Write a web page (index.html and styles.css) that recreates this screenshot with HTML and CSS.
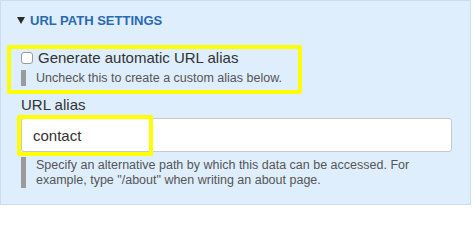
FILE: index.html
```html
<!DOCTYPE html>
<html>
<head>
<meta charset="utf-8">
<link rel="stylesheet" href="styles.css">
</head>
<body>
<div class="panel">
  <div class="summary"><span class="tri"></span>URL PATH SETTINGS</div>
  <div class="item item-check">
    <label class="check"><span class="box"></span>Generate automatic URL alias</label>
    <div class="desc">Uncheck this to create a custom alias below.</div>
    <span class="hl hl-check"></span>
  </div>
  <div class="item item-alias">
    <label class="lbl">URL alias</label>
    <div class="input">contact<span class="hl hl-input"></span></div>
    <div class="desc desc-2">Specify an alternative path by which this data can be accessed. For example, type "/about" when writing an about page.</div>
  </div>
</div>
</body>
</html>
```
FILE: styles.css
```css
html, body {
  margin: 0;
  padding: 0;
  background: #ffffff;
}
body {
  font-family: "Liberation Sans", Arial, Helvetica, sans-serif;
  color: #333333;
}
.panel {
  width: 471px;
  box-sizing: border-box;
  background: #dfeefc;
  border: 1px solid #cbdcec;
  padding: 11px 18px 16px 20px;
}
.summary {
  display: flex;
  align-items: center;
  margin-left: -4px;
  height: 16px;
  font-size: 13px;
  font-weight: bold;
  color: #2a69b4;
}
.tri {
  width: 0;
  height: 0;
  border-left: 4.5px solid transparent;
  border-right: 4.5px solid transparent;
  border-top: 7px solid #2b2b2b;
  margin-right: 5px;
  margin-top: 1px;
}
.item {
  position: relative;
}
.item-check {
  margin-top: 20px;
}
.check {
  display: flex;
  align-items: center;
  height: 18px;
  font-size: 15px;
  color: #333;
}
.box {
  width: 10px;
  height: 10px;
  border: 1px solid #9a9a9a;
  border-radius: 3px;
  background: #ffffff;
  margin-right: 5px;
  margin-top: 1px;
}
.desc {
  margin-top: 4px;
  border-left: 5px solid #9b9b9b;
  padding-left: 10px;
  font-size: 12.5px;
  line-height: 16px;
  color: #555555;
}
.item-alias {
  margin-top: 11px;
}
.lbl {
  display: block;
  font-size: 15px;
  line-height: 16px;
  color: #333;
}
.input {
  position: relative;
  margin-top: 5px;
  height: 34px;
  box-sizing: border-box;
  background: #ffffff;
  border: 1px solid #c9c9c9;
  border-radius: 3px;
  padding-left: 11px;
  display: flex;
  align-items: center;
  font-size: 15px;
  color: #333;
}
.desc-2 {
  margin-top: 5px;
  padding-top: 1px;
  line-height: 15px;
  padding-right: 20px;
}
.hl {
  position: absolute;
  box-sizing: border-box;
  border: 4px solid #ffff00;
  border-radius: 2px;
}
.hl-check {
  left: -14px;
  top: -3px;
  width: 295px;
  height: 49px;
}
.hl-input {
  left: -5px;
  top: -4px;
  width: 136px;
  height: 41px;
}
```
